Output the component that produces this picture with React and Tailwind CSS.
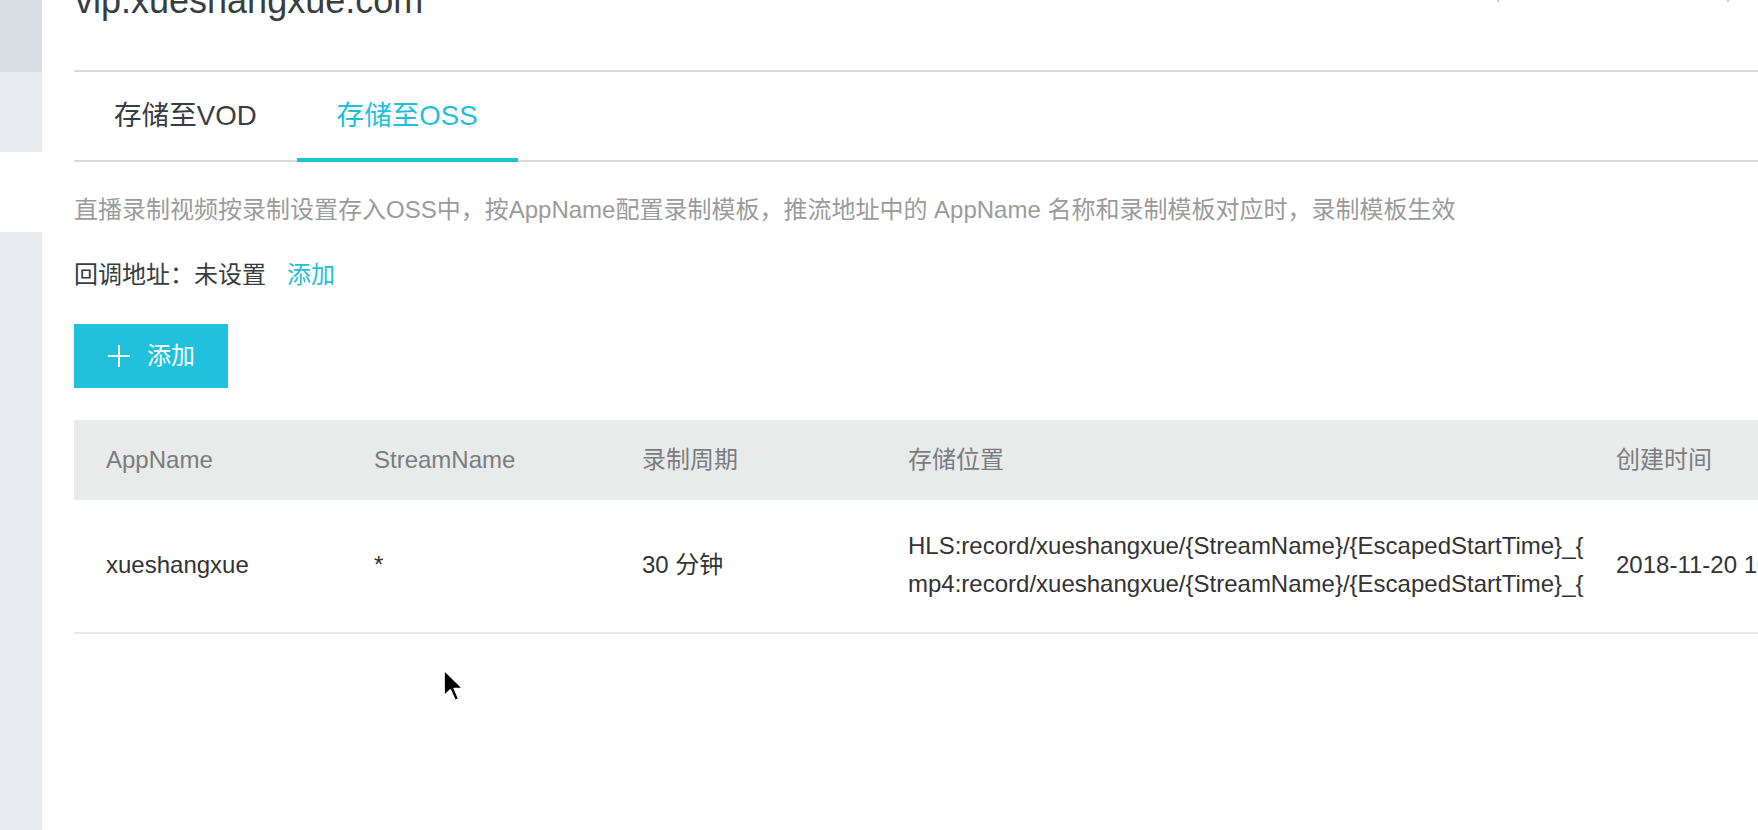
import React from 'react';

const font = "font-['Liberation_Sans','Noto_Sans_CJK_SC',sans-serif]";

const columns = [
  { label: 'AppName', w: 'w-[268px]' },
  { label: 'StreamName', w: 'w-[268px]' },
  { label: '录制周期', w: 'w-[266px]' },
  { label: '存储位置', w: 'w-[708px]' },
  { label: '创建时间', w: 'w-[400px]' },
];

const row = {
  app: 'xueshangxue',
  stream: '*',
  period: '30 分钟',
  paths: [
    'HLS:record/xueshangxue/{StreamName}/{EscapedStartTime}_{EscapedEndTime}',
    'mp4:record/xueshangxue/{StreamName}/{EscapedStartTime}_{EscapedEndTime}',
  ],
  created: '2018-11-20 10:46:25',
};

function PlusIcon() {
  return (
    <svg width="22" height="22" viewBox="0 0 22 22" fill="none">
      <path d="M11 0v22M0 11h22" stroke="white" strokeWidth="2" />
    </svg>
  );
}

function Cursor() {
  return (
    <svg
      className="absolute left-[442px] top-[668px]"
      width="24"
      height="35"
      viewBox="0 0 19 28"
    >
      <path
        d="M1.5 1.5 L1.5 22.5 L6.6 17.6 L10.4 26 L13.4 24.7 L9.7 16.4 L16.5 16.4 Z"
        fill="black"
        stroke="white"
        strokeWidth="1.4"
        strokeLinejoin="round"
      />
    </svg>
  );
}

export default function App() {
  return (
    <div className={`relative flex h-[830px] w-full overflow-hidden bg-white ${font}`}>
      {/* side menu strip */}
      <div className="flex w-[42px] shrink-0 flex-col">
        <div className="h-[72px] bg-[#d8dce3]" />
        <div className="h-[80px] bg-[#e7eaee]" />
        <div className="h-[80px] bg-white" />
        <div className="flex-1 bg-[#e7ebef]" />
      </div>

      <div className="min-w-0 flex-1 overflow-hidden pl-[32px]">
        {/* title */}
        <div className="flex h-[70px] items-start overflow-hidden">
          <p className="-mt-[17px] pl-[1px] text-[36px] leading-[36px] text-[#373d41]">vip.xueshangxue.com</p>
          <div className="ml-auto mr-[29px] h-[2px] w-[232px] border-x-2 border-[#cfcfcf]" />
        </div>

        {/* tabs */}
        <div className="flex h-[92px] border-y-2 border-[#d9d9d9]">
          <button className="flex h-[88px] items-center px-[40px] text-[27.6px] text-[#373d41]">存储至VOD</button>
          <button className="-mb-[2px] flex h-[90px] items-center border-b-4 border-[#1fbfdc] px-[40px] pt-[2px] text-[27.6px] text-[#1fbfdc]">
            存储至OSS
          </button>
        </div>

        <p className="mt-[31px] text-[24px] leading-[34px] text-[#9b9b9b]">
          直播录制视频按录制设置存入OSS中，按AppName配置录制模板，推流地址中的 AppName 名称和录制模板对应时，录制模板生效
        </p>

        <p className="mt-[31px] text-[24px] leading-[34px] text-[#373d41]">
          回调地址：未设置<span className="ml-[21px] text-[#1fbfdc]">添加</span>
        </p>

        <button className="mt-[32px] flex h-[64px] w-[154px] items-center gap-[17px] bg-[#21c1de] pl-[34px] text-[24px] text-white">
          <PlusIcon />
          添加
        </button>

        {/* table */}
        <div className="mt-[32px] w-[1910px]">
          <div className="flex h-[80px] items-center bg-[#e9ebea]">
            {columns.map((c) => (
              <div key={c.label} className={`${c.w} shrink-0 pl-[32px] text-[24px] text-[#7a7d80]`}>
                {c.label}
              </div>
            ))}
          </div>
          <div className="flex h-[134px] items-center border-b-2 border-[#e8e8e8] pb-[2px] text-[24px] text-[#333]">
            <div className="w-[268px] shrink-0 pl-[32px]">{row.app}</div>
            <div className="w-[268px] shrink-0 pl-[32px]">{row.stream}</div>
            <div className="w-[266px] shrink-0 pl-[32px]">{row.period}</div>
            <div className="w-[708px] shrink-0 overflow-hidden whitespace-nowrap pl-[32px] leading-[38px]">
              {row.paths.map((p) => (
                <div key={p}>{p}</div>
              ))}
            </div>
            <div className="w-[400px] shrink-0 whitespace-nowrap pl-[32px]">{row.created}</div>
          </div>
        </div>
      </div>

      <Cursor />
    </div>
  );
}
